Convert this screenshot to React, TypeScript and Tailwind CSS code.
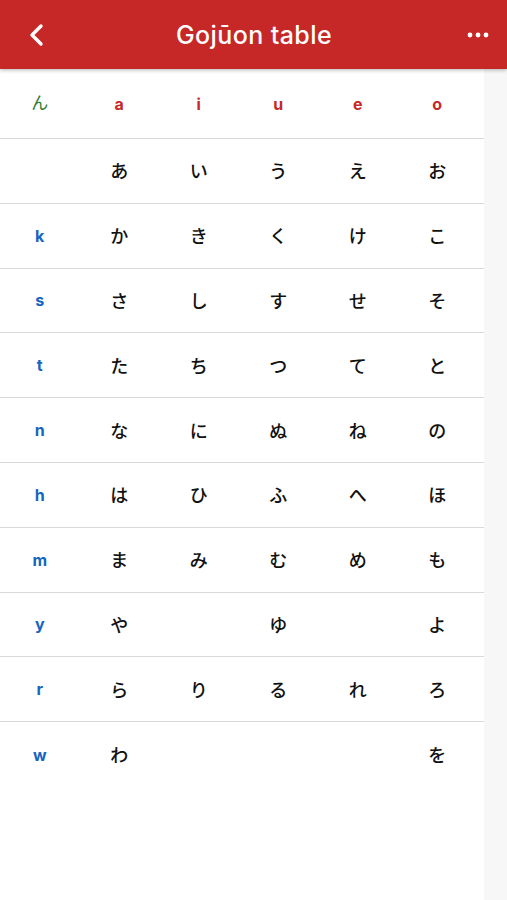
import React from 'react';

const VOWELS = ['a', 'i', 'u', 'e', 'o'];

const ROWS: { c: string; kana: string[] }[] = [
  { c: '', kana: ['あ', 'い', 'う', 'え', 'お'] },
  { c: 'k', kana: ['か', 'き', 'く', 'け', 'こ'] },
  { c: 's', kana: ['さ', 'し', 'す', 'せ', 'そ'] },
  { c: 't', kana: ['た', 'ち', 'つ', 'て', 'と'] },
  { c: 'n', kana: ['な', 'に', 'ぬ', 'ね', 'の'] },
  { c: 'h', kana: ['は', 'ひ', 'ふ', 'へ', 'ほ'] },
  { c: 'm', kana: ['ま', 'み', 'む', 'め', 'も'] },
  { c: 'y', kana: ['や', '', 'ゆ', '', 'よ'] },
  { c: 'r', kana: ['ら', 'り', 'る', 'れ', 'ろ'] },
  { c: 'w', kana: ['わ', '', '', '', 'を'] },
];

const font = { fontFamily: 'Inter, "Noto Sans CJK JP", sans-serif' };

const App: React.FC = () => {
  return (
    <div className="w-[507px] h-[900px] bg-[#f7f7f7] overflow-hidden" style={font}>
      {/* header bar */}
      <div className="relative z-10 h-[69px] bg-[#c62828] flex items-center justify-between px-[26px] shadow-[0_1px_4px_rgba(0,0,0,0.3)]">
        <svg width="20" height="24" viewBox="0 0 20 24" className="ml-[1px]">
          <path d="M14 3 L5 12 L14 21" fill="none" stroke="white" strokeWidth="3.4" strokeLinecap="round" strokeLinejoin="round" />
        </svg>
        <div className="flex-1 text-center text-white text-[25px] font-medium tracking-[0.4px] pr-[6px] pt-[3px]">Gojūon table</div>
        <svg width="22" height="6" viewBox="0 0 22 6" className="mr-[-8px]">
          <circle cx="3" cy="3" r="2.4" fill="white" />
          <circle cx="11" cy="3" r="2.4" fill="white" />
          <circle cx="19" cy="3" r="2.4" fill="white" />
        </svg>
      </div>

      <div className="w-[484px] bg-white h-[831px]">
        {/* vowel row */}
        <div className="h-[70px] border-b border-[#d9d9d9] grid grid-cols-[repeat(6,79.5px)] items-center">
          <div className="text-center text-[#2e7d32] text-[17px]">ん</div>
          {VOWELS.map(v => (
            <div key={v} className="text-center text-[#c62828] text-[16px] font-bold">{v}</div>
          ))}
        </div>

        {ROWS.map((row, i) => (
          <div
            key={i}
            className={`h-[64.8px] grid grid-cols-[repeat(6,79.5px)] items-center ${i < ROWS.length - 1 ? 'border-b border-[#d9d9d9]' : ''}`}
          >
            <div className="text-center text-[#1565c0] text-[16px] font-bold">{row.c}</div>
            {row.kana.map((k, j) => (
              <div key={j} className="text-center text-[#111] text-[18px] font-medium pt-[2px]">{k}</div>
            ))}
          </div>
        ))}
      </div>
    </div>
  );
};

export default App;
